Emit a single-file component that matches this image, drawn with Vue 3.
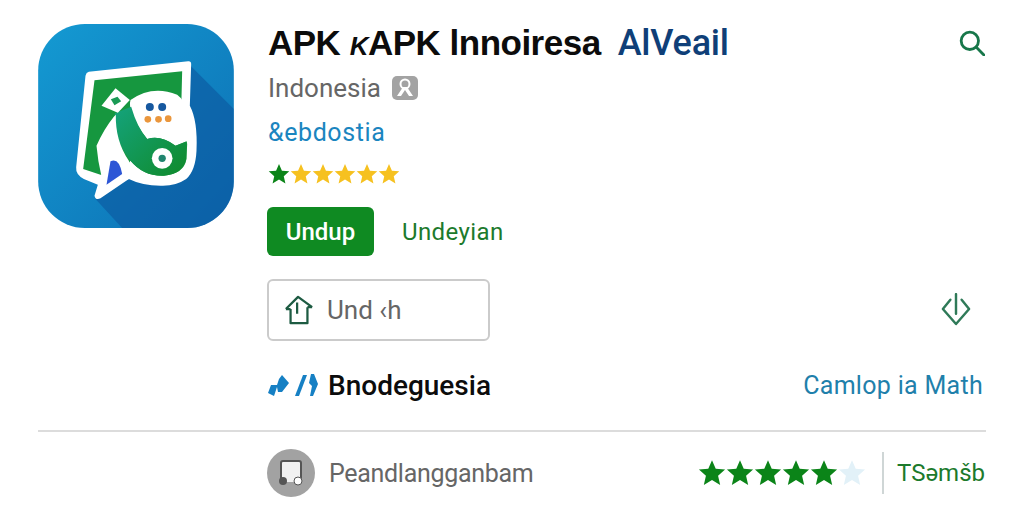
<template>
  <div class="page">
    <section class="main">
      <svg class="app-icon" viewBox="53 40 587 612" aria-hidden="true">
        <defs>
          <linearGradient id="bg" x1="0" y1="0" x2="1" y2="1">
            <stop offset="0" stop-color="#149ad2" />
            <stop offset="1" stop-color="#0d6fb4" />
          </linearGradient>
          <linearGradient id="handle" x1="0" y1="0" x2="1" y2="1">
            <stop offset="0" stop-color="#14a37c" />
            <stop offset="1" stop-color="#108a2a" />
          </linearGradient>
          <clipPath id="tile">
            <rect x="53" y="40" width="587" height="612" rx="140" />
          </clipPath>
        </defs>
        <rect x="53" y="40" width="587" height="612" rx="140" fill="url(#bg)" />
        <path clip-path="url(#tile)" d="M505 160L640 295V652H305L225 565Z" fill="#0b569e" opacity=".6" />
        <path d="M205 183L503 152Q512 151 512 160L508 285Q532 330 528 420Q525 480 497 505Q465 527 420 525Q365 525 325 505L240 563Q225 570 222 555L232 522L190 505Q165 492 167 470L195 195Q197 185 205 183Z" fill="#fff" />
        <path d="M222 209L485 182L482 300L500 400L498 445Q490 490 430 495Q370 498 330 450L300 490L240 492L188 475Z" fill="#16973f" />
        <path d="M330 268Q395 222 470 252Q515 285 505 390L465 405Q420 372 380 385Q345 340 335 310Q325 285 330 268Z" fill="#fff" />
        <path d="M283 308L332 288Q350 350 380 385Q420 372 465 405L498 392L497 445Q488 490 430 495Q370 497 330 450Q280 390 283 308Z" fill="url(#handle)" />
        <path d="M280 318Q250 355 228 405Q232 450 242 492L258 530L340 500L325 450Q284 390 286 312Z" fill="#fff" />
        <path d="M285 233L328 268L292 306L243 285Z" fill="#fff" />
        <path d="M271 266L291 258L302 272L282 284Z" fill="#1a9a55" />
        <path d="M258 522L270 452Q296 440 305 490Z" fill="#2d56d6" />
        <circle cx="388" cy="289" r="12" fill="#16589f" />
        <circle cx="425" cy="289" r="12" fill="#16589f" />
        <circle cx="382" cy="326" r="10" fill="#ea963c" />
        <circle cx="414" cy="326" r="10" fill="#ea963c" />
        <circle cx="443" cy="324" r="10" fill="#ea963c" />
        <circle cx="425" cy="443" r="31" fill="#fff" />
        <circle cx="425" cy="443" r="11" fill="#21856f" />
      </svg>

      <div class="info">
        <div class="title-row">
          <h1 class="title">APK <i class="odd">K</i>APK lnnoiresa</h1>
          <a class="title-link">AlVeail</a>
          <svg class="search" viewBox="0 0 24 24" aria-hidden="true">
            <circle cx="10" cy="10" r="8" />
            <path d="M16 16l7 7" />
          </svg>
        </div>
        <div class="region">
          <span>Indonesia</span>
          <svg class="badge" viewBox="0 0 26 24" aria-hidden="true">
            <rect width="26" height="24" rx="5" fill="#a3a3a3" />
            <circle cx="13" cy="8" r="4.5" fill="none" stroke="#fff" stroke-width="2" />
            <path d="M5 20L11 11H15L21 20H17L13 14L9 20Z" fill="#fff" />
          </svg>
        </div>
        <div class="category">&amp;ebdostia</div>
        <div class="small-stars">
          <svg v-for="(c, i) in smallStars" :key="i" viewBox="0 0 24 24" :fill="c" aria-hidden="true">
            <path :d="starPath" />
          </svg>
        </div>
        <div class="actions">
          <button class="btn-primary">Undup</button>
          <span class="action-label">Undeyian</span>
        </div>
        <div class="outline-row">
          <button class="btn-outline">
            <svg class="house" viewBox="0 0 32 32" aria-hidden="true">
              <path d="M2 15L15 2L30 13M7 15H2M7 15V30H25V13M25 13H30" />
              <path d="M14 8V20" />
            </svg>
            <span>Und ‹h</span>
          </button>
          <svg class="power" viewBox="0 0 32 36" aria-hidden="true">
            <path d="M10 7L2 17L16 33L30 17L22 7" />
            <path d="M16 1V22" />
          </svg>
        </div>
        <div class="link-row">
          <div class="link-left">
            <svg class="mini" viewBox="0 0 50 24" aria-hidden="true">
              <path d="M0 20L3 12H9L11 6L14 2L21 10L14 19H10L9 14L6 23Z" fill="#1680c4" />
              <path d="M27 23L35 2H39L31 23Z" fill="#1680c4" />
              <path d="M43 1H46L50 11L45 23H42L44 13L41 10Z" fill="#1680c4" />
            </svg>
            <span class="link-name">Bnodeguesia</span>
          </div>
          <span class="link-right">Camlop ia Math</span>
        </div>
      </div>
    </section>

    <footer class="foot">
      <div class="foot-left">
        <span class="avatar">
          <svg viewBox="0 0 26 26" aria-hidden="true">
            <path d="M3 22V3Q3 1 5 1H21Q23 1 23 3V22" fill="#f1f1f1" stroke="#555" stroke-width="2" />
            <circle cx="5" cy="21" r="4" fill="#555" />
            <circle cx="20" cy="21" r="4" fill="#fff" stroke="#555" />
          </svg>
        </span>
        <span class="foot-name">Peandlangganbam</span>
      </div>
      <div class="foot-right">
        <div class="big-stars">
          <svg v-for="(c, i) in bigStars" :key="i" viewBox="0 0 24 24" :fill="c" aria-hidden="true">
            <path :d="starPath" />
          </svg>
        </div>
        <span class="sep"></span>
        <span class="foot-tag">TSəmšb</span>
      </div>
    </footer>
  </div>
</template>

<script setup>
const starPath = 'M12 1l3.2 7.4 8 .7-6 5.3 1.8 7.9L12 18.1 5 22.3l1.8-7.9-6-5.3 8-.7z'
const green = '#0b8418'
const smallStars = [green, '#f6c120', '#f6c120', '#f6c120', '#f6c120', '#f6c120']
const bigStars = [green, green, green, green, green, '#e2f1f8']
</script>

<style>
body {
  background: #fff;
}
</style>

<style scoped>
.page {
  width: 1024px;
  height: 512px;
  box-sizing: border-box;
  padding: 24px 38px 0 38px;
  font-family: Roboto, "Liberation Sans", sans-serif;
  overflow: hidden;
}

.main {
  display: flex;
  gap: 34px;
  height: 406px;
  border-bottom: 2px solid #dcdcdc;
}

.app-icon {
  width: 196px;
  height: 204px;
  flex: none;
}

.info {
  flex: 1;
  display: flex;
  flex-direction: column;
}

.title-row {
  display: flex;
  align-items: center;
  height: 38px;
}

.title {
  margin: 0;
  font-family: "Liberation Sans", sans-serif;
  font-size: 35px;
  font-weight: 700;
  letter-spacing: -0.5px;
  color: #0c0c0c;
  white-space: nowrap;
}

.odd {
  font-size: 26px;
  font-weight: 700;
}

.title-link {
  margin-left: 17px;
  font-size: 36px;
  font-weight: 500;
  color: #0f3f78;
  letter-spacing: -0.2px;
}

.search {
  margin-left: auto;
  margin-right: 1px;
  width: 26px;
  height: 26px;
  fill: none;
  stroke: #17774a;
  stroke-width: 2.6;
  stroke-linecap: round;
}

.region {
  display: flex;
  align-items: center;
  gap: 11px;
  margin-top: 11px;
  height: 30px;
  font-size: 26px;
  color: #666;
}

.badge {
  width: 26px;
  height: 24px;
}

.category {
  margin-top: 15px;
  height: 30px;
  line-height: 30px;
  font-size: 25px;
  letter-spacing: 0.6px;
  color: #1a85bf;
}

.small-stars {
  display: flex;
  margin-top: 15px;
  height: 24px;
}

.small-stars svg {
  width: 22px;
  height: 22px;
}

.actions {
  display: flex;
  align-items: center;
  gap: 28px;
  margin-top: 20px;
  margin-left: -1px;
}

.btn-primary {
  width: 107px;
  height: 49px;
  border: none;
  border-radius: 6px;
  background: #0f8a22;
  color: #fff;
  font: 500 24px Roboto, "Liberation Sans", sans-serif;
}

.action-label {
  font-size: 24px;
  letter-spacing: 0.4px;
  color: #1c7a2c;
}

.outline-row {
  display: flex;
  align-items: center;
  justify-content: space-between;
  margin-top: 23px;
  margin-left: -1px;
  padding-right: 15px;
}

.btn-outline {
  display: flex;
  align-items: center;
  gap: 13px;
  width: 223px;
  height: 62px;
  padding: 0 0 0 15px;
  box-sizing: border-box;
  border: 2px solid #cbcbcb;
  border-radius: 6px;
  background: #fff;
  color: #666;
  font: 400 26px Roboto, "Liberation Sans", sans-serif;
}

.house {
  width: 30px;
  height: 30px;
  fill: none;
  stroke: #1d5b42;
  stroke-width: 2.4;
  stroke-linejoin: round;
}

.power {
  width: 30px;
  height: 34px;
  fill: none;
  stroke: #2f7a58;
  stroke-width: 2.6;
  stroke-linecap: round;
  stroke-linejoin: round;
}

.link-row {
  display: flex;
  align-items: center;
  justify-content: space-between;
  margin-top: 27px;
  height: 34px;
  padding-right: 3px;
}

.link-left {
  display: flex;
  align-items: center;
  gap: 10px;
}

.mini {
  width: 50px;
  height: 24px;
}

.link-name {
  font-size: 28px;
  font-weight: 500;
  color: #0c0c0c;
}

.link-right {
  font-size: 25px;
  letter-spacing: 0.3px;
  color: #1f80ab;
}

.foot {
  display: flex;
  align-items: center;
  justify-content: space-between;
  height: 82px;
  padding-left: 229px;
  padding-right: 1px;
}

.foot-left {
  display: flex;
  align-items: center;
  gap: 14px;
}

.avatar {
  display: flex;
  align-items: center;
  justify-content: center;
  width: 48px;
  height: 48px;
  border-radius: 50%;
  background: #a2a2a2;
}

.avatar svg {
  width: 26px;
  height: 26px;
}

.foot-name {
  font-size: 25px;
  letter-spacing: -0.3px;
  color: #666;
}

.foot-right {
  display: flex;
  align-items: center;
}

.big-stars {
  display: flex;
}

.big-stars svg {
  width: 28px;
  height: 28px;
}

.sep {
  width: 2px;
  height: 42px;
  margin: 0 13px 0 16px;
  background: #cfd6d6;
}

.foot-tag {
  font-size: 24px;
  color: #1c7a2c;
}
</style>
